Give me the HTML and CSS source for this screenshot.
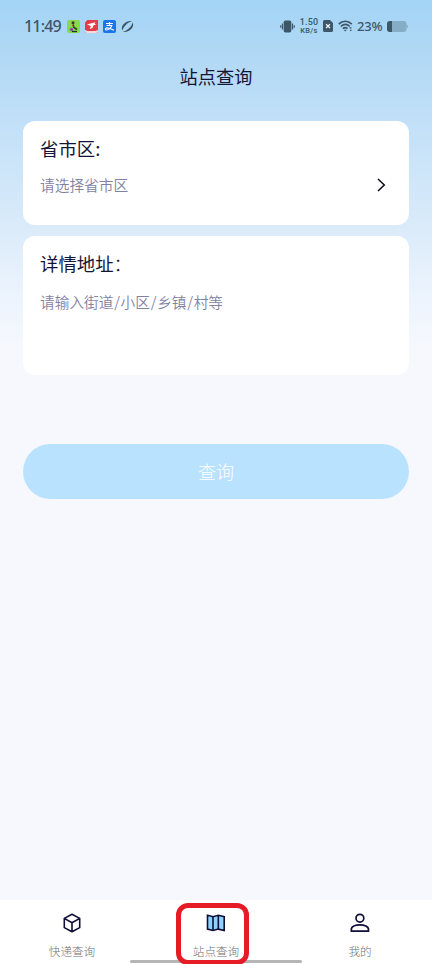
FILE: index.html
```html
<!DOCTYPE html>
<html lang="zh-CN">
<head>
<meta charset="utf-8">
<title>站点查询</title>
<link rel="stylesheet" href="styles.css">
</head>
<body>
<div class="screen">
  <header class="status">
    <span class="time">11:49</span>
    <div class="apps">
      <svg width="13" height="13" viewBox="0 0 13 13"><rect width="13" height="13" rx="2" fill="#86dc48"/><circle cx="6" cy="2.8" r="1.500" fill="#463528"/><path d="M6 4.500l1 3 3 2" stroke="#283c35" stroke-width="1.600" fill="none"/><circle cx="4.500" cy="9.500" r="1.800" fill="#8a4f9a"/><path d="M5 11.500h5" stroke="#24332c" stroke-width="1.300"/><path d="M5 5.500l2 1" stroke="#d83939" stroke-width="1"/></svg>
      <svg width="13" height="13" viewBox="0 0 13 13"><path d="M2.500 0H13v11a2 2 0 0 1-2 2H2a2 2 0 0 1-2-2V2.500z" fill="#e33e46"/><path d="M2 4.500l3.500-1 5-1.300-1 1.800 2 .5-3 .8L7.500 8l-2.800 1 1.200-3z" fill="#fff"/><path d="M0 10l2.500 1h8l2.500-1v1a2 2 0 0 1-2 2H2a2 2 0 0 1-2-2z" fill="#f8d8df"/></svg>
      <svg width="13" height="13" viewBox="0 0 13 13"><rect width="13" height="13" rx="2" fill="#1875ee"/><path d="M3 3.500h7M6.500 2v3.500M3.500 5.500h5.300C8 8 5.500 10 3.700 10c-1.800 0-1.600-2.200.2-2.200 2 0 4.500 1.200 7 2.500" fill="none" stroke="#fff" stroke-width="1.150"/></svg>
      <svg width="13" height="13" viewBox="0 0 13 13"><path d="M1.300 10.500C-.9 6.200 4.800-.2 11 1.200 8.500 1.900 7 2.800 5.300 4.400 3.300 6.300 2 8.300 1.300 10.500zM11.700 2.500c2.200 4.300-3.500 10.700-9.700 9.300 2.500-.7 4-1.600 5.700-3.200 2-1.900 3.300-3.900 4-6.100z" fill="#3d5668"/></svg>
    </div>
    <div class="system">
      <svg class="vibrate" width="15" height="13" viewBox="0 0 15 13"><rect x="3.700" y=".500" width="7.600" height="12" rx="1.700" fill="#3d5668"/><path d="M2.500 3.500v6M12.500 3.500v6M.8 5.200v2.600M14.200 5.200v2.600" stroke="#3d5668" stroke-width="1.200"/></svg>
      <div class="speed"><span class="rate">1.50</span><span class="unit">KB/s</span></div>
      <svg class="sim" width="10" height="12" viewBox="0 0 10 12"><path d="M1.500 0H7l3 3v7.500a1.500 1.500 0 0 1-1.500 1.500h-7A1.500 1.500 0 0 1 0 10.500v-9A1.500 1.500 0 0 1 1.500 0z" fill="#3d5668"/><path d="M3.100 4.200l3.800 3.800M6.900 4.200L3.100 8" stroke="#e7f5ff" stroke-width="1.300"/></svg>
      <svg class="wifi" width="15" height="12" viewBox="0 0 15 12"><path d="M.7 4.100C4.500.3 10 .3 13.800 4.100M2.800 6.500c2.800-2.600 6.200-2.600 8.900-.2M4.900 8.700c1.500-1.300 3.200-1.300 4.600 0" fill="none" stroke="#3d5668" stroke-width="1.600"/><path d="M5.700 9.800h3L7.200 11.500zM11.500 7.200h2v1.300h-2zM12 9.700h1.500V11H12z" fill="#3d5668"/></svg>
      <span class="percent">23%</span>
      <svg class="battery" width="21" height="11" viewBox="0 0 21 11"><rect width="19.500" height="11" rx="3" fill="#86adc6"/><path d="M3 0h2v11H3a3 3 0 0 1-3-3V3a3 3 0 0 1 3-3z" fill="#3d5668"/><path d="M19.500 3.500q1.500.4 1.500 2t-1.500 2z" fill="#86adc6"/></svg>
    </div>
  </header>
  <h1 class="title">站点查询</h1>
  <main class="form">
    <section class="card region">
      <h2 class="label">省市区:</h2>
      <div class="field"><span class="hint">请选择省市区</span>
        <svg width="9" height="14" viewBox="0 0 9 14"><path d="M1 1l6.300 6L1 13" fill="none" stroke="#0b0b18" stroke-width="1.500"/></svg>
      </div>
    </section>
    <section class="card address">
      <h2 class="label">详情地址<span class="colon">：</span></h2>
      <div class="field"><span class="hint">请输入街道<span class="slash">/</span>小区<span class="slash">/</span>乡镇<span class="slash">/</span>村等</span></div>
    </section>
    <button class="submit">查询</button>
  </main>
  <nav class="tabs">
    <div class="tab">
      <svg width="20" height="20" viewBox="0 0 20 20"><path d="M10 1.200l7.700 4.200v9.200L10 18.800l-7.700-4.200V5.400zM2.300 5.400L10 9.800l7.700-4.400M10 9.800v9" fill="none" stroke="#100f35" stroke-width="1.600" stroke-linejoin="round"/></svg>
      <span>快递查询</span>
    </div>
    <div class="tab">
      <svg width="20" height="20" viewBox="0 0 20 20"><path d="M1.500 2.300l5.500 1.400 5.300-1.400 5.900 1.400v13.800l-5.900-1.400L7 17.500l-5.500-1.400z" fill="#8ed3ff" stroke="#100f35" stroke-width="1.600"/><path d="M7 3.700v13.800M12.300 2.300v13.800" stroke="#100f35" stroke-width="1.600"/></svg>
      <span>站点查询</span>
    </div>
    <div class="tab">
      <svg width="20" height="20" viewBox="0 0 20 20"><circle cx="9.900" cy="5.200" r="3.900" fill="none" stroke="#100f35" stroke-width="1.700"/><path d="M1.300 18.200v-1.700c0-6.200 17.200-6.200 17.200 0v1.700z" fill="none" stroke="#100f35" stroke-width="1.700" stroke-linejoin="round"/></svg>
      <span>我的</span>
    </div>
    <i class="home-indicator"></i>
    <i class="highlight"></i>
  </nav>
</div>
</body>
</html>
```
FILE: styles.css
```css
* { box-sizing: border-box; }
body { margin: 0; font-family: "Noto Sans CJK SC", sans-serif; }
.screen {
  width: 432px;
  height: 964px;
  display: flex;
  flex-direction: column;
  overflow: hidden;
  background: linear-gradient(180deg, #a3d4f6 0, #b0d8f4 52px, #c1e0f8 120px, #dbebfa 230px, #edf4fd 300px, #f6f8fe 350px);
}
.status {
  height: 52px;
  display: flex;
  align-items: center;
  padding: 0 24px;
  color: #3d5668;
}
.time {
  width: 43px;
  font: 500 16px/20px "Noto Sans", sans-serif;
  letter-spacing: -.8px;
}
.apps { display: flex; gap: 5px; }
.apps svg, .system svg { display: block; }
.system { display: flex; align-items: center; margin-left: auto; }
.speed {
  width: 20px;
  margin: 0 4px;
  display: flex;
  flex-direction: column;
  align-items: center;
  font-family: Roboto, sans-serif;
  font-weight: 500;
}
.rate { font-size: 9px; line-height: 9px; letter-spacing: .2px; }
.unit { font-size: 7.500px; line-height: 8px; letter-spacing: .3px; }
.wifi { margin-left: 5px; }
.percent {
  width: 26px;
  margin: 0 4px;
  font: 500 13px/18px "Noto Sans", sans-serif;
  letter-spacing: -.2px;
}
.title {
  margin: 0;
  height: 50px;
  color: #141438;
  font-size: 18.200px;
  line-height: 48px;
  font-weight: 400;
  text-align: center;
}
.form {
  flex: 1;
  display: flex;
  flex-direction: column;
  padding: 19px 23px 0;
}
.card { padding: 14px 18px 14px 17px; border-radius: 12px; background: #fff; }
.region { height: 103.500px; }
.address { height: 139px; margin-top: 11.500px; }
.label {
  margin: 0;
  color: #141438;
  font-size: 18.400px;
  line-height: 26px;
  font-weight: 400;
}
.colon { font-weight: 300; }
.field {
  display: flex;
  justify-content: space-between;
  align-items: center;
  height: 22px;
  margin-top: 13px;
  padding-right: 5px;
}
.address .field { margin-top: 15px; }
.hint { color: #8182a2; font-size: 14.700px; line-height: 22px; font-weight: 350; }
.slash { padding: 0 .7px; }
.submit {
  height: 55px;
  margin: 69px 0 0;
  padding: 0;
  border: 0;
  border-radius: 28px;
  background: #b9e2ff;
  color: #fff;
  font: 300 18px/55px "Noto Sans CJK SC", sans-serif;
}
.tabs {
  position: relative;
  height: 64px;
  display: grid;
  grid-template-columns: repeat(3, 1fr);
  background: #fff;
}
.tab {
  display: flex;
  flex-direction: column;
  align-items: center;
  padding-top: 13px;
  color: #707070;
  font-size: 11.600px;
  line-height: 18px;
  font-weight: 300;
}
.tab span { margin-top: 9px; }
.home-indicator {
  position: absolute;
  left: 130px;
  bottom: 1px;
  width: 172px;
  height: 3px;
  border-radius: 2px;
  background: #b5b5b5;
}
.highlight {
  position: absolute;
  left: 176px;
  top: 3px;
  width: 73px;
  height: 62px;
  border: 5px solid #e51c25;
  border-radius: 12px;
}
```
